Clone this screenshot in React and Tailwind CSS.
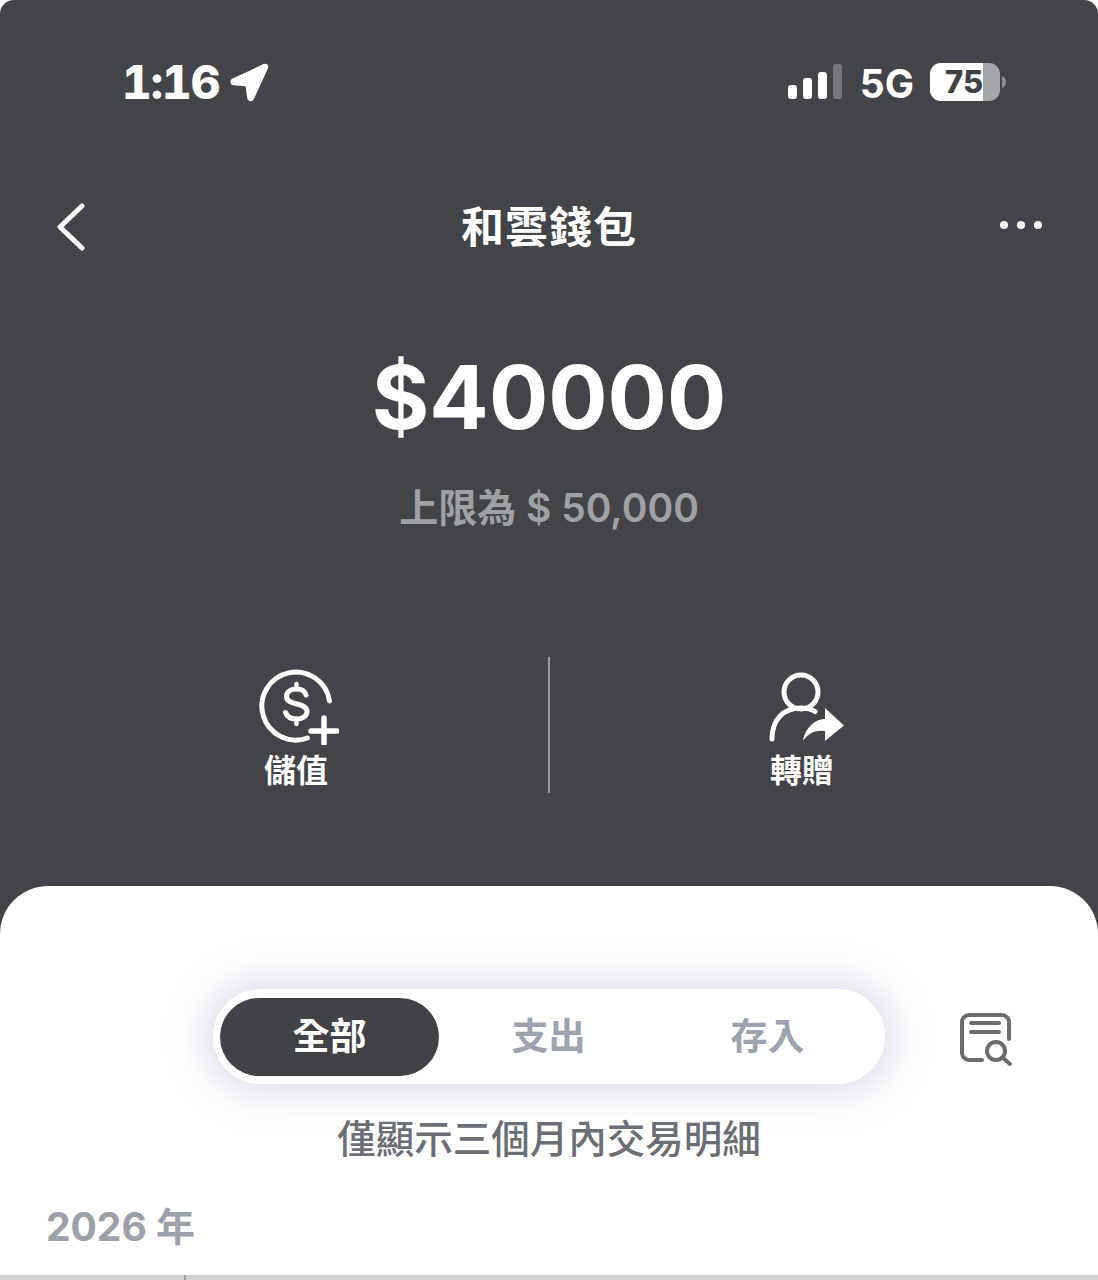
import React from 'react'

const cjk = "font-['Inter','Noto_Sans_CJK_TC',sans-serif]"

function LocationArrow() {
  return (
    <svg width="40" height="40" viewBox="0 0 40 40" fill="white" stroke="white" strokeWidth="2" strokeLinejoin="round">
      <path d="M35 3 4 17.500c-2.600 1.300-2 4.600.9 4.800l11.600.9c.6 0 1 .5 1.100 1.100l1.600 11.700c.4 2.700 3.500 3.100 4.700.7L38 6c1-2.400-.7-4-3-3Z" />
    </svg>
  )
}

function SignalBars() {
  return (
    <div className="flex items-end gap-[6px]">
      <div className="h-[14px] w-[9px] rounded-[3px] bg-white" />
      <div className="h-[21px] w-[9px] rounded-[3px] bg-white" />
      <div className="h-[27px] w-[9px] rounded-[3px] bg-white" />
      <div className="h-[35px] w-[9px] rounded-[3px] bg-[#77787b]" />
    </div>
  )
}

function Battery() {
  return (
    <div className="flex items-center gap-[2px]">
      <div className="relative flex h-[38px] w-[70px] items-center overflow-hidden rounded-[11px] bg-[#a5a6a8]">
        <div className="absolute inset-y-0 left-0 w-[53px] bg-white" />
        <span className="relative pl-[15px] text-[31px] leading-none font-extrabold text-[#404145]">75</span>
      </div>
      <svg width="4" height="12" viewBox="0 0 4 12" fill="#8b8c8f">
        <path d="M0 0c2.500.8 4 3 4 6s-1.500 5.200-4 6Z" />
      </svg>
    </div>
  )
}

function TopUpIcon() {
  return (
    <svg className="ml-[6px]" width="80" height="76" viewBox="0 0 80 76" fill="none" stroke="white" strokeLinecap="round">
      <path d="M69 31A34 34 0 1 0 47 68" strokeWidth="5" transform="translate(1.500 1)" />
      <path d="M47 26c-1-4-4.500-6-9.500-6-6 0-10 3-10 7.500 0 10 20.500 5 20.500 15 0 4.500-4.500 7.500-10.500 7.500-5.500 0-9.500-2.500-11-6.500" strokeWidth="5" />
      <path d="M37.500 15v5M37.500 50v5" strokeWidth="4.500" />
      <path d="M65 49v26M52 62h26" strokeWidth="5.500" />
    </svg>
  )
}

function TransferIcon() {
  return (
    <svg className="ml-[10px]" width="76" height="72" viewBox="0 0 76 72" fill="none" stroke="white" strokeLinecap="round">
      <circle cx="32" cy="20" r="17" strokeWidth="5" />
      <path d="M3 67c0-19 11-31 29-31 5 0 10 1 14 3.500" strokeWidth="5" />
      <path
        d="M34 69c2-13 12-22 22-22V36l19 17.500L56 69V59c-9-1-17 2-22 10Z"
        fill="white"
        stroke="none"
      />
    </svg>
  )
}

function RecordSearchIcon() {
  return (
    <svg width="56" height="56" viewBox="0 0 56 56" fill="none" stroke="#6b6c6f" strokeLinecap="round">
      <path d="M24 48H11a7 7 0 0 1-7-7V10a7 7 0 0 1 7-7h33a7 7 0 0 1 7 7v17" strokeWidth="4" />
      <path d="M13 11h28M13 20h28" strokeWidth="4" />
      <circle cx="38" cy="39" r="9" strokeWidth="4" />
      <path d="m45 46 7 6" strokeWidth="4" />
    </svg>
  )
}

export default function App() {
  return (
    <div className={`h-[1280px] w-[1098px] overflow-hidden rounded-t-[14px] bg-white ${cjk}`}>
      <div className="h-[1280px] bg-[#434448]">
        {/* Status bar */}
        <div className="flex h-[166px] items-start justify-between pt-[56px] pr-[92px] pl-[122px]">
          <div className="flex items-center gap-[10px]">
            <span className="text-[46px] leading-[52px] font-extrabold tracking-[-1px] text-white tabular-nums">1:16</span>
            <LocationArrow />
          </div>
          <div className="flex items-center pt-[4px]">
            <SignalBars />
            <span className="mt-[4px] mr-[16px] ml-[18px] text-[39px] leading-none font-bold text-white">5G</span>
            <Battery />
          </div>
        </div>

        {/* Header */}
        <div className="flex h-[122px] items-center justify-between pr-[56px] pl-[56px]">
          <div className="w-[42px]">
            <svg width="30" height="48" viewBox="0 0 30 48" fill="none" stroke="white" strokeWidth="5" strokeLinecap="round" strokeLinejoin="round">
              <path d="M26 3 4 24l22 21" />
            </svg>
          </div>
          <h1 className="text-[43px] leading-none font-semibold tracking-[1px] text-white">和雲錢包</h1>
          <div className="mb-[4px] flex w-[42px] gap-[9px]">
            <div className="h-[8px] w-[8px] rounded-full bg-white" />
            <div className="h-[8px] w-[8px] rounded-full bg-white" />
            <div className="h-[8px] w-[8px] rounded-full bg-white" />
          </div>
        </div>

        {/* Balance */}
        <div className="flex flex-col items-center pt-[59px]">
          <div className="text-[88px] leading-[100px] font-bold text-white">$40000</div>
          <div className="mt-[38px] text-[39px] leading-[46px] font-semibold text-[#a0a1a5]">上限為 $ 50,000</div>
        </div>

        {/* Actions */}
        <div className="mt-[126px] flex h-[136px] items-stretch px-[44px]">
          <button className="flex flex-1 flex-col items-center pt-[12px]">
            <TopUpIcon />
            <span className="mt-[7px] text-[32px] leading-[38px] font-bold text-white">儲值</span>
          </button>
          <div className="w-[2px] bg-[#9a9b9e]" />
          <button className="flex flex-1 flex-col items-center pt-[15px]">
            <TransferIcon />
            <span className="mt-[8px] text-[32px] leading-[38px] font-bold text-white">轉贈</span>
          </button>
        </div>

        {/* Sheet */}
        <div className="mt-[93px] h-[394px] rounded-t-[48px] bg-white">
          <div className="relative flex justify-center pt-[103px]">
            <div className="flex h-[95px] w-[672px] items-center rounded-full bg-white px-[7px] shadow-[0_0_36px_10px_rgba(170,175,200,0.4)]">
              <div className="flex h-[78px] w-[219px] items-center justify-center rounded-full bg-[#414246] text-[37px] font-bold text-white">全部</div>
              <div className="flex h-[78px] w-[219px] items-center justify-center text-[37px] font-bold text-[#9ca3af]">支出</div>
              <div className="flex h-[78px] w-[219px] items-center justify-center text-[37px] font-bold text-[#9ca3af]">存入</div>
            </div>
            <div className="absolute top-[126px] left-[958px]">
              <RecordSearchIcon />
            </div>
          </div>
          <p className="mt-[32px] text-center text-[38.500px] leading-[46px] font-medium text-[#6b6e75]">僅顯示三個月內交易明細</p>
          <div className="mt-[42px] pl-[46px] text-[39px] leading-[46px] font-bold text-[#9ca0a8]">2026 年</div>
          <div className="relative mt-[25px] h-[5px] bg-[#d0d1d3]">
            <div className="absolute top-0 left-[184px] h-[5px] w-[2px] bg-[#9ca0a8]" />
          </div>
        </div>
      </div>
    </div>
  )
}
